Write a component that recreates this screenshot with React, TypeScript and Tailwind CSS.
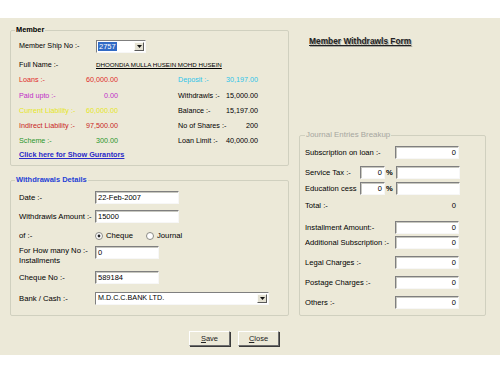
import type { ReactNode } from "react";

const font = { fontFamily: '"Liberation Sans", Arial, sans-serif' };

function TextBox({
  value,
  width,
  align = "left",
}: {
  value?: string;
  width: string;
  align?: "left" | "right";
}) {
  return (
    <div
      className={`${width} flex h-[13px] items-center border border-t-[#7f7f7f] border-l-[#7f7f7f] border-b-[#f7f7f7] border-r-[#f7f7f7] bg-white px-[2px] text-[7.5px] text-black shadow-[inset_1px_1px_0_#c8c8c0] ${
        align === "right" ? "justify-end" : "justify-start"
      }`}
    >
      {value}
    </div>
  );
}

function DropArrow() {
  return (
    <div className="flex h-full w-[10px] items-center justify-center border border-t-[#fbfbf8] border-l-[#fbfbf8] border-b-[#5a5a5a] border-r-[#5a5a5a] bg-[#e4e1d2]">
      <svg width="5" height="3" viewBox="0 0 5 3">
        <path d="M0 0h5L2.5 3z" fill="#111" />
      </svg>
    </div>
  );
}

function Radio({ checked, label }: { checked?: boolean; label: string }) {
  return (
    <div className="flex items-center gap-[3px]">
      <svg width="8" height="8" viewBox="0 0 8 8">
        <circle cx="4" cy="4" r="3.5" fill="#fff" stroke="#8a8a84" strokeWidth="1" />
        {checked && <circle cx="4" cy="4" r="1.4" fill="#222" />}
      </svg>
      <span>{label}</span>
    </div>
  );
}

function Group({
  legend,
  legendClass,
  className,
  children,
}: {
  legend: string;
  legendClass: string;
  className: string;
  children: ReactNode;
}) {
  return (
    <fieldset className={`rounded-[2px] border border-[#d0d0bf] p-0 ${className}`}>
      <legend className={`ml-[4px] px-[1px] leading-[10px] ${legendClass}`}>{legend}</legend>
      {children}
    </fieldset>
  );
}

function StatRow({
  h,
  left,
  right,
}: {
  h: string;
  left: [string, string, string];
  right: [string, string, string];
}) {
  return (
    <div className={`flex ${h} items-center`}>
      <div className={`flex w-[99px] justify-between ${left[2]}`}>
        <span>{left[0]}</span>
        <span>{left[1]}</span>
      </div>
      <div className={`ml-[60px] flex w-[80px] justify-between ${right[2]}`}>
        <span>{right[0]}</span>
        <span>{right[1]}</span>
      </div>
    </div>
  );
}

function JRow({
  mt,
  label,
  children,
}: {
  mt: string;
  label: string;
  children: ReactNode;
}) {
  return (
    <div className={`flex h-[13px] items-center ${mt}`}>
      <span className="w-[90px]">{label}</span>
      {children}
    </div>
  );
}

function WRow({ mt, label, children }: { mt: string; label: string; children: ReactNode }) {
  return (
    <div className={`flex h-[13px] items-center ${mt}`}>
      <span className="w-[76px]">{label}</span>
      {children}
    </div>
  );
}

function Button({ hot, rest }: { hot: string; rest: string }) {
  return (
    <div className="flex h-[15px] w-[41px] items-center justify-center border border-t-white border-l-white border-b-[#6e6e6e] border-r-[#6e6e6e] bg-[#ece9d8] text-[7.5px] text-[#222] shadow-[1px_1px_0_#3a3a3a]">
      <span className="underline underline-offset-1">{hot}</span>
      {rest}
    </div>
  );
}

export default function App() {
  return (
    <div className="h-[375px] w-[500px] bg-white pt-[18px]" style={font}>
      <div className="flex h-[337px] flex-col bg-[#ece9d8] text-black">
        <div className="flex pl-[10px] pt-[7px]">
          {/* left column */}
          <div className="flex w-[279px] flex-col">
            <Group
              legend="Member"
              legendClass="text-[7.4px] font-bold text-black"
              className="h-[141px]"
            >
              <div className="flex flex-col pl-[8px] text-[7.2px]">
                <div className="mt-[5px] flex h-[13px] items-center">
                  <span className="w-[77px]">Member Ship No :-</span>
                  <div className="flex h-[13px] w-[50px] items-center border border-t-[#7f7f7f] border-l-[#7f7f7f] border-b-[#f7f7f7] border-r-[#f7f7f7] bg-white pl-[1px]">
                    <span className="bg-[#316ac5] px-[1px] text-[7.5px] leading-[9px] text-white">2757</span>
                    <div className="ml-auto h-full py-[1px] pr-[1px]">
                      <DropArrow />
                    </div>
                  </div>
                </div>
                <div className="mt-[7px] flex h-[10px] items-center">
                  <span className="w-[77px]">Full Name :-</span>
                  <span className="text-[6.2px] underline underline-offset-1">
                    DHOONDIA MULLA HUSEIN MOHD HUSEIN
                  </span>
                </div>
                <div className="mt-[2px] flex flex-col">
                  <StatRow
                    h="h-[16px]"
                    left={["Loans :-", "60,000.00", "text-[#e02a2a]"]}
                    right={["Deposit :-", "30,197.00", "text-[#2ec4e8]"]}
                  />
                  <StatRow
                    h="h-[16px]"
                    left={["Paid upto :-", "0.00", "text-[#c02cc8]"]}
                    right={["Withdrawls :-", "15,000.00", "text-black"]}
                  />
                  <StatRow
                    h="h-[15px]"
                    left={["Current Liability :-", "60,000.00", "text-[#e6e61e]"]}
                    right={["Balance :-", "15,197.00", "text-black"]}
                  />
                  <StatRow
                    h="h-[15px]"
                    left={["Indirect Liability :-", "97,500.00", "text-[#c8241c]"]}
                    right={["No of Shares :-", "200", "text-black"]}
                  />
                  <StatRow
                    h="h-[14px]"
                    left={["Scheme  :-", "300.00", "text-[#2a962a]"]}
                    right={["Loan Limit :-", "40,000.00", "text-black"]}
                  />
                  <div className="flex h-[14px] items-center">
                    <span className="text-[7.3px] font-bold text-[#2a2ac8] underline underline-offset-1">
                      Click here for Show Gurantors
                    </span>
                  </div>
                </div>
              </div>
            </Group>

            <Group
              legend="Withdrawals Details"
              legendClass="text-[7.5px] font-bold text-[#1f3fd6]"
              className="mt-[9px] h-[141px]"
            >
              <div className="flex flex-col pl-[8px] text-[7.7px]">
                <WRow mt="mt-[6px]" label="Date :-">
                  <TextBox value="22-Feb-2007" width="w-[84px]" />
                </WRow>
                <WRow mt="mt-[6px]" label="Withdrawls Amount :-">
                  <TextBox value="15000" width="w-[84px]" />
                </WRow>
                <div className="mt-[6px] flex h-[14px] items-center">
                  <span className="w-[76px]">of :-</span>
                  <div className="flex w-[51px]">
                    <Radio checked label="Cheque" />
                  </div>
                  <Radio label="Journal" />
                </div>
                <div className="mt-[3px] flex h-[20px] items-start">
                  <span className="w-[76px] leading-[10px]">
                    For How many No :-
                    <br />
                    Installments
                  </span>
                  <TextBox value="0" width="w-[64px]" />
                </div>
                <WRow mt="mt-[5px]" label="Cheque No :-">
                  <TextBox value="589184" width="w-[64px]" />
                </WRow>
                <WRow mt="mt-[8px]" label="Bank / Cash :-">
                  <div className="flex h-[13px] w-[174px] items-center border border-t-[#7f7f7f] border-l-[#7f7f7f] border-b-[#f7f7f7] border-r-[#f7f7f7] bg-white pl-[2px] text-[7.2px]">
                    <span>M.D.C.C.BANK LTD.</span>
                    <div className="ml-auto h-full py-[1px] pr-[1px]">
                      <DropArrow />
                    </div>
                  </div>
                </WRow>
              </div>
            </Group>
          </div>

          {/* right column */}
          <div className="ml-[10px] flex w-[187px] flex-col">
            <div className="mt-[11px] h-[10px] pl-[10px] text-[8.4px] font-bold leading-[10px] text-[#222] underline underline-offset-1 [text-shadow:1px_1px_0_#a8a8a0]">
              Member Withdrawls Form
            </div>
            <Group
              legend="Journal Entries Breakup"
              legendClass="ml-[5px] text-[7.9px] text-[#a6a6a0]"
              className="mt-[84px] h-[186px]"
            >
              <div className="flex flex-col pl-[5px] text-[7.6px]">
                <JRow mt="mt-[6px]" label="Subscription on loan :-">
                  <TextBox value="0" width="w-[64px]" align="right" />
                </JRow>
                <div className="mt-[7px] flex h-[13px] items-center">
                  <span className="w-[55px]">Service Tax :-</span>
                  <TextBox value="0" width="w-[25px]" align="right" />
                  <span className="ml-[1px] w-[10px] font-bold">%</span>
                  <TextBox width="w-[64px]" />
                </div>
                <div className="mt-[3px] flex h-[13px] items-center">
                  <span className="w-[55px]">Education cess</span>
                  <TextBox value="0" width="w-[25px]" align="right" />
                  <span className="ml-[1px] w-[10px] font-bold">%</span>
                  <TextBox width="w-[64px]" />
                </div>
                <div className="mt-[5px] flex h-[11px] items-center">
                  <span className="w-[90px]">Total :-</span>
                  <span className="w-[61px] text-right">0</span>
                </div>
                <JRow mt="mt-[10px]" label="Installment Amount:-">
                  <TextBox value="0" width="w-[64px]" align="right" />
                </JRow>
                <JRow mt="mt-[2px]" label="Additional Subscription :-">
                  <TextBox value="0" width="w-[64px]" align="right" />
                </JRow>
                <JRow mt="mt-[7px]" label="Legal Charges :-">
                  <TextBox value="0" width="w-[64px]" align="right" />
                </JRow>
                <JRow mt="mt-[7px]" label="Postage Charges :-">
                  <TextBox value="0" width="w-[64px]" align="right" />
                </JRow>
                <JRow mt="mt-[7px]" label="Others :-">
                  <TextBox value="0" width="w-[64px]" align="right" />
                </JRow>
              </div>
            </Group>
          </div>
        </div>

        <div className="mt-[15px] flex gap-[8px] pl-[189px]">
          <Button hot="S" rest="ave" />
          <Button hot="C" rest="lose" />
        </div>
      </div>
    </div>
  );
}
